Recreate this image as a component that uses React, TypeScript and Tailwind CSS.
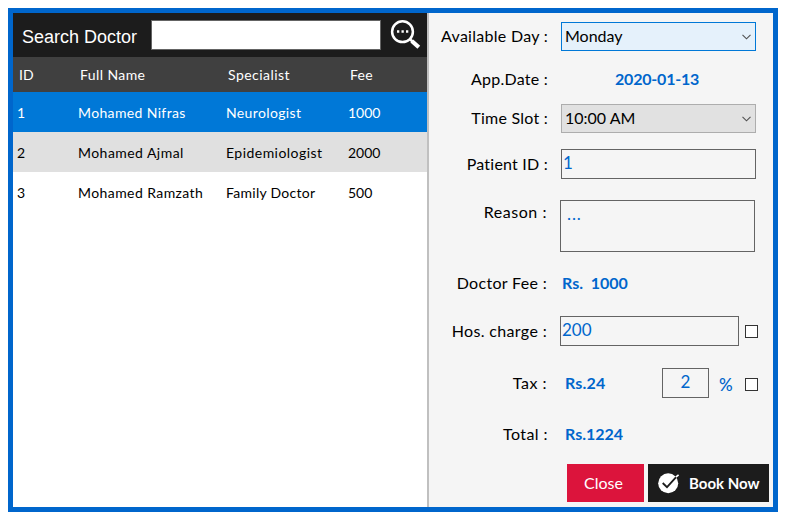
import React from "react";

type TextProps = { children: string; className?: string };
const T = ({ children, className = "" }: TextProps) => (
  <span className={`inline-block whitespace-pre leading-5 ${className}`}>{children}</span>
);

const Row = ({ label, h, labelTop, right = "w-[119px]", track, children }: {
  label: string; h: string; labelTop: string; right?: string; track: string; children?: React.ReactNode;
}) => (
  <div className={`flex items-start ${h}`}>
    <div className={`shrink-0 text-right text-[16px] leading-5 ${right} ${labelTop}`}>
      <T className={track}>{label}</T>
    </div>
    {children}
  </div>
);

const Chevron = () => (
  <svg width="9" height="6" viewBox="0 0 9 6" className="mr-1" fill="none" stroke="#505050" strokeWidth="1.1">
    <path d="M0.5 0.8 4.5 4.8 8.5 0.8" />
  </svg>
);

const Check = ({ className }: { className: string }) => (
  <div className={`h-[13px] w-[13px] shrink-0 border border-[#333] bg-white ${className}`} />
);

const doctors = [
  { id: "1", name: "Mohamed Nifras", nameTrack: "tracking-[0.36px]", spec: "Neurologist", specTrack: "tracking-[0.36px]", fee: "1000", style: "bg-[#0078d7] text-white" },
  { id: "2", name: "Mohamed Ajmal", nameTrack: "tracking-[0.45px]", spec: "Epidemiologist", specTrack: "tracking-[0.46px]", fee: "2000", style: "bg-[#e0e0e0] text-black" },
  { id: "3", name: "Mohamed Ramzath", nameTrack: "tracking-[0.42px]", spec: "Family Doctor", specTrack: "tracking-[0.28px]", fee: "500", style: "bg-white text-black" },
];

export default function App() {
  return (
    <div className="h-[521px] w-[785px] bg-white pl-2 pt-2 font-['Lato',sans-serif]">
      <div className="flex h-[504px] w-[770px] border-[5px] border-[#0066cc]">
        <section className="w-[414px] bg-white">
          <div className="flex h-11 items-center bg-[#1c1c1c] pl-[9px] font-['Liberation_Sans',sans-serif] text-[18px] text-white">
            <T className="mt-1 w-[129px]">Search Doctor</T>
            <div className="h-[30px] w-[230px] border border-[#646464] bg-white" />
            <svg width="32" height="32" viewBox="0 0 32 32" className="ml-[9px]" fill="none" stroke="white">
              <circle cx="12.5" cy="12.7" r="10.4" strokeWidth="2.5" />
              <path d="M20.3 20.5 22.5 22.5" strokeWidth="2.5" />
              <path d="M21.8 22 28.8 28.2" strokeWidth="4.2" />
              <path d="M7 12.5h2.3M11.5 12.5h2.3M16 12.5h2.3" strokeWidth="2.3" />
            </svg>
          </div>
          <div className="grid h-[35px] grid-cols-[61px_148px_122px_1fr] items-center bg-[#404040] pl-[6px] text-[14px] text-white">
            <T>ID</T>
            <T className="tracking-[0.4px]">Full Name</T>
            <T className="tracking-[0.45px]">Specialist</T>
            <T className="tracking-[0.3px]">Fee</T>
          </div>
          {doctors.map((d) => (
            <div key={d.id} className={`grid h-10 grid-cols-[61px_148px_122px_1fr] items-center justify-items-start pl-1 pt-0.5 text-[14px] ${d.style}`}>
              <T>{d.id}</T>
              <T className={d.nameTrack}>{d.name}</T>
              <T className={d.specTrack}>{d.spec}</T>
              <T>{d.fee}</T>
            </div>
          ))}
        </section>
        <section className="w-[346px] border-l-2 border-[#c0c0c0] bg-[#f5f5f5] text-black">
          <Row label="Available Day :" h="h-[52px]" labelTop="mt-[13px]" track="tracking-[0.28px]">
            <div className="ml-[13px] mt-[9px] flex h-[29px] w-[195px] items-center justify-between border border-[#0078d7] bg-[#e5f1fb] pl-[3px] text-[16px]">
              <T className="mb-0.5">Monday</T><Chevron />
            </div>
          </Row>
          <Row label="App.Date :" h="h-[34px]" labelTop="mt-1" track="tracking-[0.24px]">
            <T className="ml-[67px] mt-1 text-[16px] font-bold tracking-[-0.2px] text-[#0066cc]">2020-01-13</T>
          </Row>
          <Row label="Time Slot :" h="h-[45px]" labelTop="mt-[9px]" track="tracking-[0.24px]">
            <div className="ml-[13px] mt-[5px] flex h-[29px] w-[195px] items-center justify-between border border-[#adadad] bg-[#e1e1e1] pl-[3px] text-[16px]">
              <T className="mb-0.5">10:00 AM</T><Chevron />
            </div>
          </Row>
          <Row label="Patient ID :" h="h-[50px]" labelTop="mt-[10px]" track="tracking-[0.22px]">
            <div className="ml-[13px] mt-[5px] h-[30px] w-[195px] border border-[#646464] pl-[1px] text-[17px] text-[#0066cc]"><T>1</T></div>
          </Row>
          <Row label="Reason :" h="h-[70px]" labelTop="mt-2" right="w-[118px]" track="tracking-[0.55px]">
            <div className="ml-[13px] mt-[6px] h-[52px] w-[195px] border border-[#646464] pl-[6px] text-[17px] text-[#0066cc]"><T className="tracking-[0.9px]">...</T></div>
          </Row>
          <Row label="Doctor Fee :" h="h-[45px]" labelTop="mt-[9px]" right="w-[118px]" track="tracking-[0.32px]">
            <T className="ml-[15px] mt-[9px] text-[16px] font-bold text-[#0066cc]">Rs.  1000</T>
          </Row>
          <Row label="Hos. charge :" h="h-[50px]" labelTop="mt-3" right="w-[118px]" track="tracking-[0.35px]">
            <div className="ml-[13px] mt-[7px] h-[30px] w-[179px] border border-[#646464] pl-[1px] text-[17px] text-[#0066cc]"><T>200</T></div>
            <Check className="ml-[6px] mt-4" />
          </Row>
          <Row label="Tax :" h="h-[55px]" labelTop="mt-[14px]" right="w-[118px]" track="tracking-[0.5px]">
            <T className="ml-[18px] mt-[14px] w-[97px] text-[16px] font-bold tracking-[0.2px] text-[#0066cc]">Rs.24</T>
            <div className="mt-[9px] h-[30px] w-[47px] border border-[#646464] text-center text-[17px] text-[#0066cc]"><T>2</T></div>
            <T className="ml-[10px] mt-4 w-[26px] text-[17px] font-medium text-[#0066cc]">%</T>
            <Check className="mt-[19px]" />
          </Row>
          <Row label="Total :" h="h-[50px]" labelTop="mt-[10px]" track="tracking-[0.43px]">
            <T className="ml-[17px] mt-[10px] text-[16px] font-bold text-[#0066cc]">Rs.1224</T>
          </Row>
          <div className="flex justify-end gap-1 pr-1">
            <div className="flex h-[38px] w-[77px] items-center bg-[#dc143c] pl-[17px] text-[16px] text-white"><T>Close</T></div>
            <div className="flex h-[38px] w-[121px] items-center bg-[#1c1c1c] pl-[10px] text-white">
              <svg width="22" height="22" viewBox="0 0 22 22" className="mr-[9px]">
                <circle cx="10.2" cy="11.3" r="10" fill="white" />
                <path d="M4.7 11 9 15.2 19 4.2" fill="none" stroke="#1c1c1c" strokeWidth="1.8" />
                <path d="M17.8 5.2 20.6 2.8" fill="none" stroke="white" strokeWidth="1.6" />
              </svg>
              <T className="text-[15px] font-bold">Book Now</T>
            </div>
          </div>
        </section>
      </div>
    </div>
  );
}
